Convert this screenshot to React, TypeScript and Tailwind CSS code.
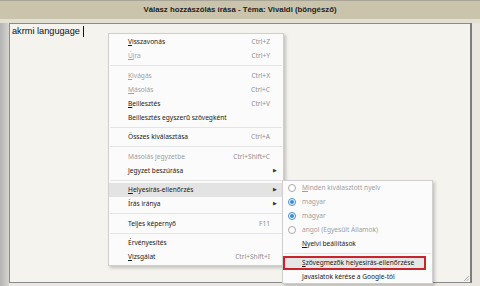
type Item = {
    label: string;
    key?: number;
    shortcut?: string;
    disabled?: boolean;
    arrow?: boolean;
    active?: boolean;
    sep?: boolean;
};

const items: Item[] = [
    { label: 'Visszavonás', key: 0, shortcut: 'Ctrl+Z' },
    { label: 'Újra', key: 0, shortcut: 'Ctrl+Y', disabled: true },
    { label: '', sep: true },
    { label: 'Kivágás', key: 0, shortcut: 'Ctrl+X', disabled: true },
    { label: 'Másolás', key: 0, shortcut: 'Ctrl+C', disabled: true },
    { label: 'Beillesztés', key: 0, shortcut: 'Ctrl+V' },
    { label: 'Beillesztés egyszerű szövegként' },
    { label: '', sep: true },
    { label: 'Összes kiválasztása', shortcut: 'Ctrl+A' },
    { label: '', sep: true },
    { label: 'Másolás jegyzetbe', shortcut: 'Ctrl+Shift+C', disabled: true },
    { label: 'Jegyzet beszúrása', arrow: true },
    { label: '', sep: true },
    { label: 'Helyesírás-ellenőrzés', key: 0, arrow: true, active: true },
    { label: 'Írás iránya', arrow: true },
    { label: '', sep: true },
    { label: 'Teljes képernyő', shortcut: 'F11' },
    { label: '', sep: true },
    { label: 'Érvényesítés' },
    { label: 'Vizsgálat', key: 0, shortcut: 'Ctrl+Shift+I' },
];

function Label({ text, k }: { text: string; k?: number }) {
    if (k === undefined) return <span>{text}</span>;
    return (
        <span>
            {text.slice(0, k)}
            <span className="underline underline-offset-1">{text[k]}</span>
            {text.slice(k + 1)}
        </span>
    );
}

function Radio({ checked }: { checked: boolean }) {
    return checked ? (
        <span className="flex h-[8px] w-[8px] items-center justify-center rounded-full border border-[#3d8ad6] bg-white">
            <span className="h-[4px] w-[4px] rounded-full bg-[#3d8ad6]" />
        </span>
    ) : (
        <span className="h-[8px] w-[8px] rounded-full border border-[#a8a8a8] bg-white" />
    );
}

function ContextMenu() {
    return (
        <div className="absolute left-[108px] top-[33px] w-[176px] border border-[#cfcfcf] bg-[#fbfbfb] py-[1px] shadow-[2px_2px_3px_rgba(0,0,0,0.2)]">
            {items.map((it, i) =>
                it.sep ? (
                    <div key={i} className="flex h-[5.5px] items-center px-[1px]">
                        <div className="h-px w-full bg-[#e4e4e4]" />
                    </div>
                ) : (
                    <div
                        key={i}
                        className={`flex h-[14px] items-center pl-[19px] pr-[6px] ${
                            it.active ? 'bg-[#e3e3e3]' : ''
                        } ${it.disabled ? 'text-[#a0a0a0]' : 'text-[#1a1a1a]'}`}
                    >
                        <div className="flex-1">
                            <Label text={it.label} k={it.key} />
                        </div>
                        {it.shortcut && <div className="mr-[7px] text-[#8e8e8e]">{it.shortcut}</div>}
                        {it.arrow && <div className="text-[5px] text-[#333]">▶</div>}
                    </div>
                ),
            )}
        </div>
    );
}

function SpellMenu() {
    return (
        <div className="absolute left-[282px] top-[180px] w-[151px] border border-[#cfcfcf] bg-[#fbfbfb] shadow-[2px_2px_3px_rgba(0,0,0,0.2)]">
            <div className="flex h-[14px] items-center gap-[6px] pl-[5px] text-[#a0a0a0]">
                <Radio checked={false} />
                <Label text="Minden kiválasztott nyelv" k={0} />
            </div>
            <div className="flex h-[14px] items-center gap-[6px] pl-[5px] text-[#a0a0a0]">
                <Radio checked />
                <span>magyar</span>
            </div>
            <div className="flex h-[14px] items-center gap-[6px] pl-[5px] text-[#a0a0a0]">
                <Radio checked />
                <span>magyar</span>
            </div>
            <div className="flex h-[14px] items-center gap-[6px] pl-[5px] text-[#a0a0a0]">
                <Radio checked={false} />
                <span>angol (Egyesült Államok)</span>
            </div>
            <div className="flex h-[14px] items-center pl-[19px] text-[#1a1a1a]">
                <Label text="Nyelvi beállítások" k={0} />
            </div>
            <div className="flex h-[5px] items-center px-[1px]">
                <div className="h-px w-full bg-[#e4e4e4]" />
            </div>
            <div className="mr-[6px] flex h-[14px] items-center border-2 border-[#c9242b] bg-[#e6e6e6] pl-[17px] text-[#1a1a1a]">
                <Label text="Szövegmezők helyesírás-ellenőrzése" k={0} />
            </div>
            <div className="flex h-[13px] items-center pl-[19px] text-[#1a1a1a]">Javaslatok kérése a Google-tól</div>
        </div>
    );
}

export default function App() {
    return (
        <div className="relative flex h-[286px] w-[480px] flex-col overflow-hidden bg-[#e9e7df] font-['Noto_Sans',sans-serif] text-[6.6px]">
            <div className="flex h-[19px] items-center justify-center border-t border-[#a9a596] bg-[#cbc4ad] font-['Liberation_Sans',sans-serif] text-[7.8px] font-bold text-[#222]">
                Válasz hozzászólás írása - Téma: Vivaldi (böngésző)
            </div>
            <div className="h-[4px] bg-[#e2dfd3]" />
            <div className="flex flex-1">
                <div className="w-[9px] bg-gradient-to-r from-[#b4b4b4] to-[#d6d5cf]" />
                <div className="relative mb-[3px] flex-1 border border-[#8a8a8a] border-r-2 border-r-[#7d7d7d] bg-[#f4f3ee] px-[2px] py-[1px]">
                    <div className="flex items-center font-['Liberation_Sans',sans-serif] text-[9.2px] text-[#111]">
                        akrmi langugage
                        <span className="ml-[3px] inline-block h-[11px] w-px bg-[#111]" />
                    </div>
                    <svg className="absolute bottom-[1px] right-[1px]" width="6" height="6" viewBox="0 0 6 6">
                        <path d="M1 6 L6 1 M3.5 6 L6 3.5" stroke="#999" strokeWidth="0.8" />
                    </svg>
                </div>
                <div className="w-[8px] bg-[#e9e7df]" />
            </div>
            <ContextMenu />
            <SpellMenu />
        </div>
    );
}
